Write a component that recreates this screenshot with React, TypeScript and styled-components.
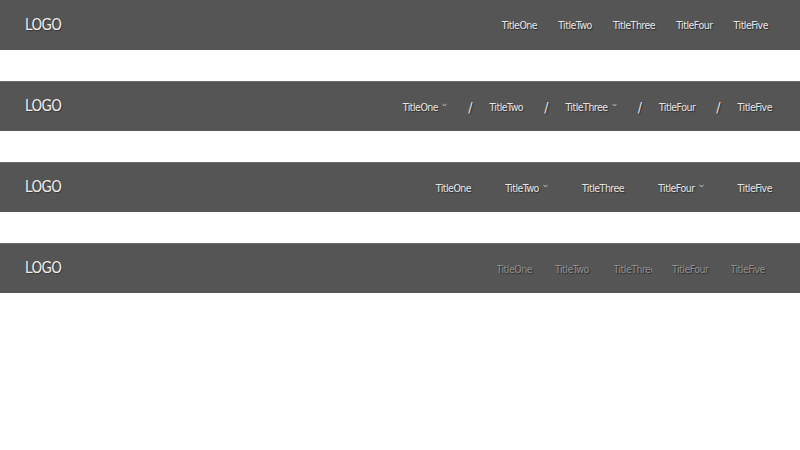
import React, { FC } from "react";
import styled, { createGlobalStyle } from "styled-components";

const GlobalStyle = createGlobalStyle`
  body {
    margin: 0;
    background: #fff;
    font-family: "DejaVu Sans", sans-serif;
    font-stretch: condensed;
  }
`;

type Variant = "plain" | "slash" | "dropdown" | "clipped";

type Item = {
  title: string;
  caret?: boolean;
};

type NavProps = {
  variant: Variant;
  items: Item[];
};

const CaretIcon: FC = () => (
  <Caret width="5" height="4" viewBox="0 0 5 4">
    <path d="M0.5 0.8 L2.5 3 L4.5 0.8" fill="none" stroke="#cfcfcf" strokeWidth="0.9" />
  </Caret>
);

const NavBar: FC<NavProps> = ({ variant, items }) => {
  return (
    <Bar $first={variant === "plain"}>
      <Logo>LOGO</Logo>
      <Menu $variant={variant}>
        {items.map((item, i) => (
          <React.Fragment key={item.title}>
            {variant === "slash" && i > 0 && <Slash>/</Slash>}
            <MenuItem $variant={variant}>
              {item.title}
              {item.caret && <CaretIcon />}
            </MenuItem>
          </React.Fragment>
        ))}
      </Menu>
    </Bar>
  );
};

const names = ["TitleOne", "TitleTwo", "TitleThree", "TitleFour", "TitleFive"];

const App: FC = () => {
  return (
    <>
      <GlobalStyle />
      <NavBar variant="plain" items={names.map((title) => ({ title }))} />
      <NavBar
        variant="slash"
        items={names.map((title, i) => ({ title, caret: i === 0 || i === 2 }))}
      />
      <NavBar
        variant="dropdown"
        items={names.map((title, i) => ({ title, caret: i === 1 || i === 3 }))}
      />
      <NavBar variant="clipped" items={names.map((title) => ({ title }))} />
    </>
  );
};

const Bar = styled.header<{ $first: boolean }>`
  display: flex;
  align-items: center;
  justify-content: space-between;
  height: 50px;
  box-sizing: border-box;
  margin-top: ${(p) => (p.$first ? "0" : "31px")};
  padding-left: 25px;
  background-color: #555555;
  border-top: ${(p) => (p.$first ? "none" : "1px solid #6b6b6b")};
`;

const Logo = styled.div`
  color: #eeeeee;
  font-size: 15px;
  letter-spacing: -0.6px;
  text-shadow: 1px 1px 1px rgba(0, 0, 0, 0.35);
  margin-top: -1px;
`;

const menuPadding: Record<Variant, string> = {
  plain: "32px",
  slash: "28px",
  dropdown: "28px",
  clipped: "11px",
};

const menuGap: Record<Variant, string> = {
  plain: "21px",
  slash: "0",
  dropdown: "34px",
  clipped: "0",
};

const Menu = styled.nav<{ $variant: Variant }>`
  display: flex;
  align-items: center;
  gap: ${(p) => menuGap[p.$variant]};
  padding-right: ${(p) => menuPadding[p.$variant]};
`;

const MenuItem = styled.span<{ $variant: Variant }>`
  display: inline-block;
  color: ${(p) => (p.$variant === "clipped" ? "#8f8f8f" : "#e6e6e6")};
  font-size: 10.5px;
  letter-spacing: -0.5px;
  white-space: nowrap;
  text-shadow: 1px 1px 1px rgba(0, 0, 0, 0.5);
  ${(p) =>
    p.$variant === "clipped" &&
    `
    width: 38px;
    margin-right: 20.5px;
    overflow: hidden;
  `}
`;

const Caret = styled.svg`
  margin-left: 4px;
  vertical-align: 4px;
`;

const Slash = styled.span`
  color: #e6e6e6;
  font-size: 14px;
  margin: 0 17px 0 21px;
  text-shadow: 1px 1px 1px rgba(0, 0, 0, 0.5);
`;

export default App;
